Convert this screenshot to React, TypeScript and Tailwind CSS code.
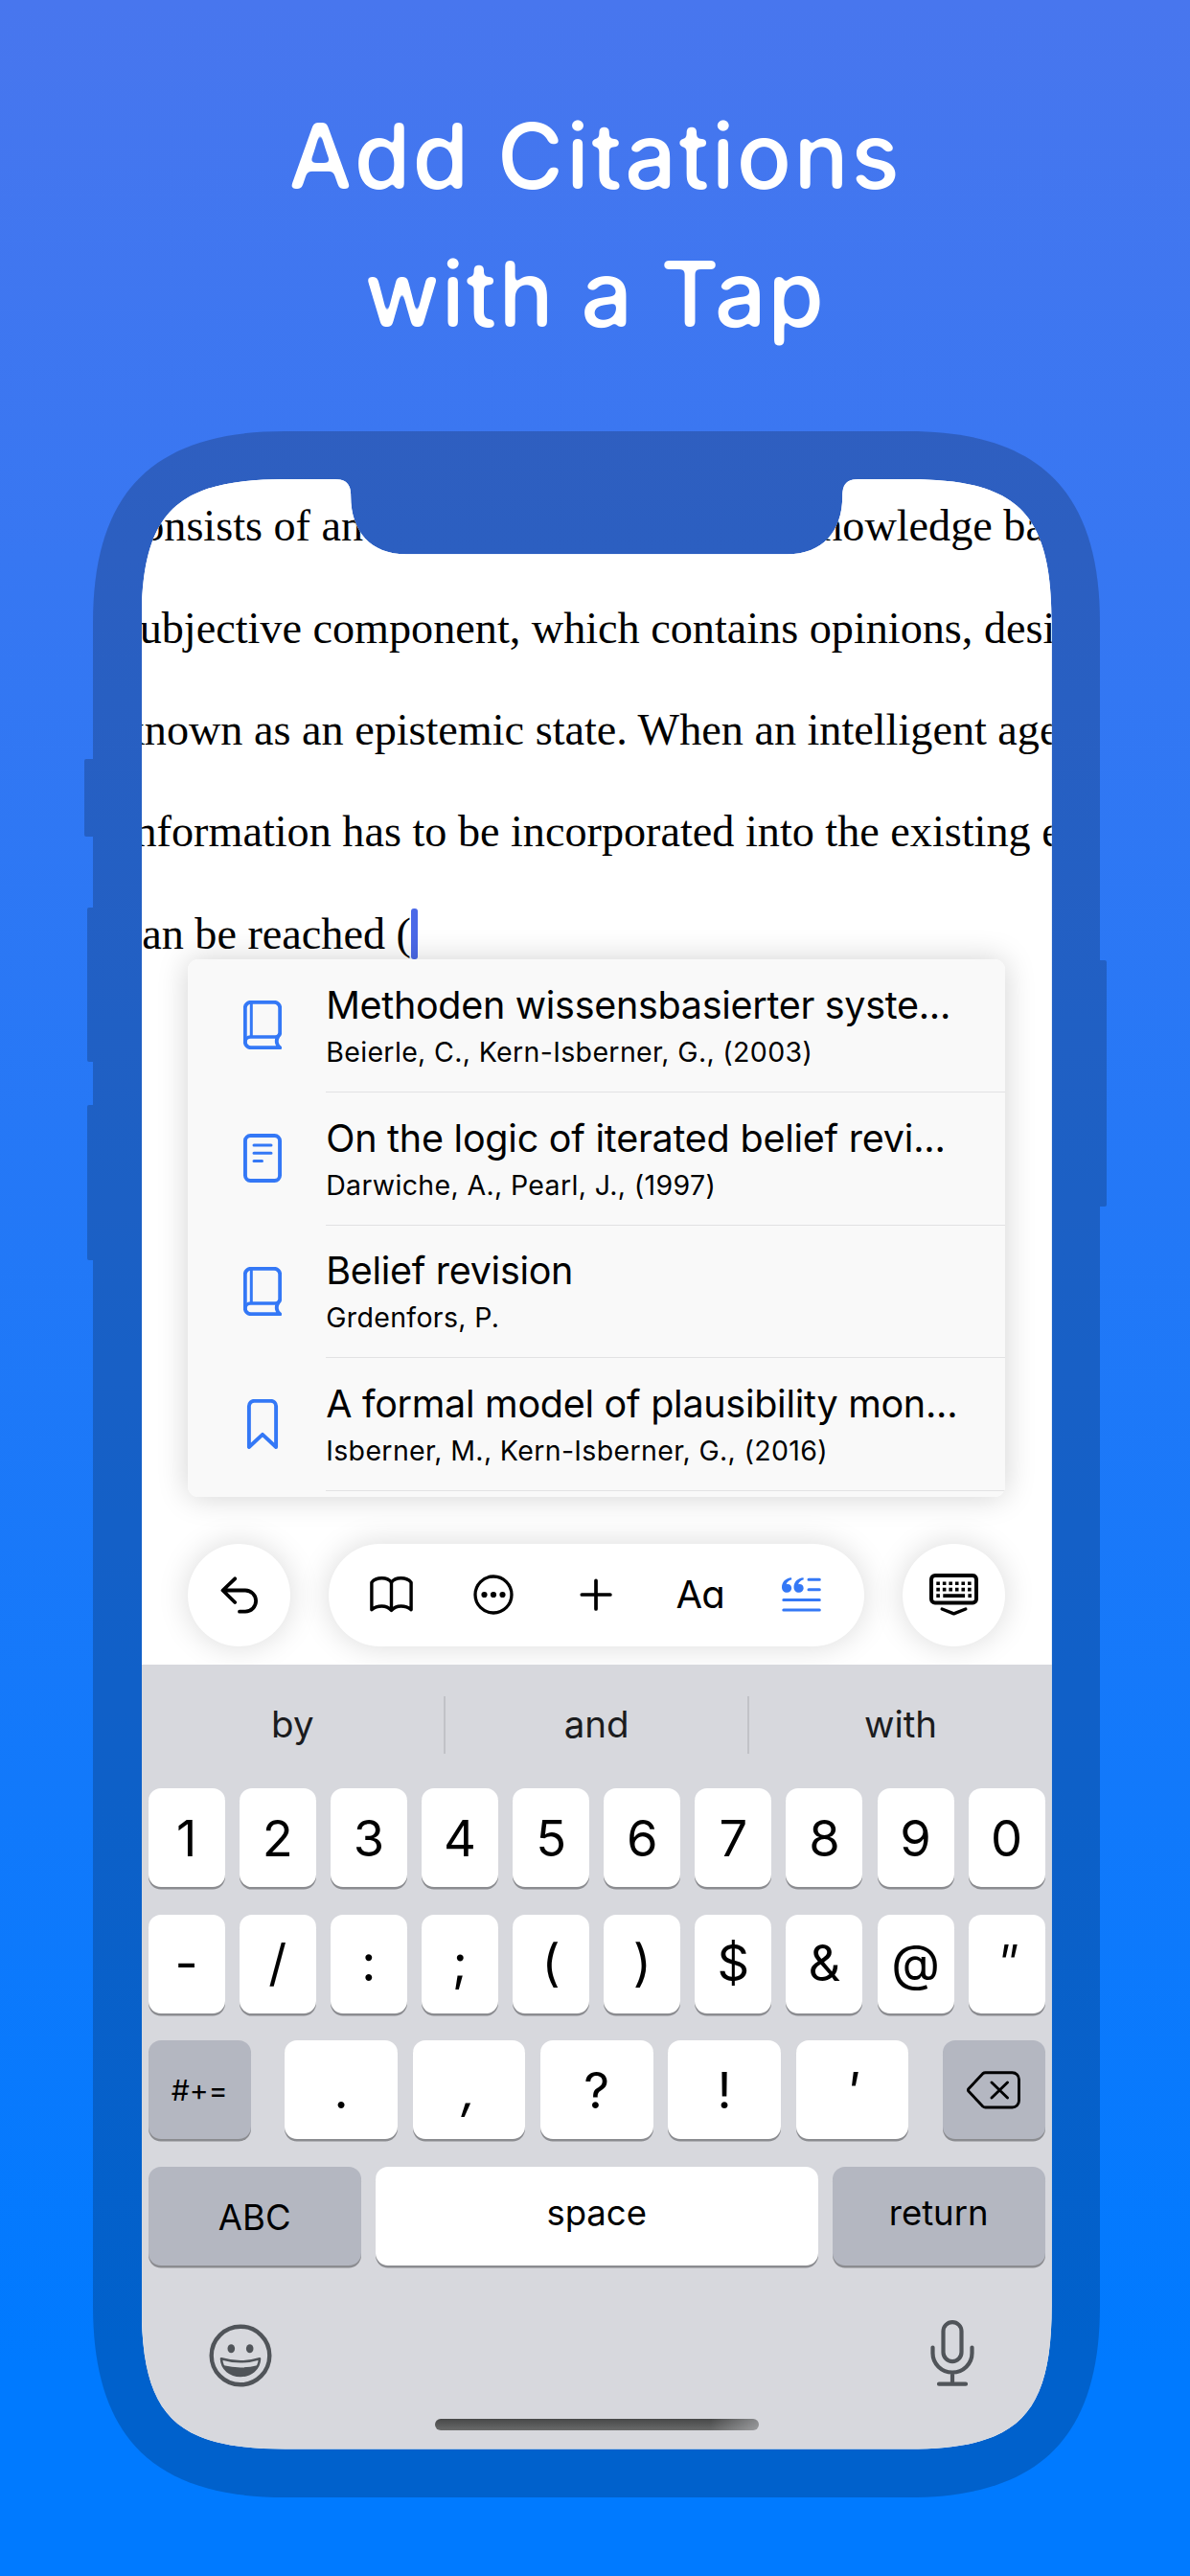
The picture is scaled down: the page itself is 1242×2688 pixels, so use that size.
import type { ReactNode } from "react";

const sans = "font-['Inter','Liberation_Sans',sans-serif]";

function BookIcon() {
  return (
    <svg width="40" height="51" viewBox="0 0 40 51" fill="none" stroke="#3478f6" strokeWidth="3.9" strokeLinecap="round" strokeLinejoin="round">
      <path d="M35 38c2-.8 3.2-2.2 3.2-4.500V7.800a6 6 0 0 0-6-6H7.800a6 6 0 0 0-6 6v35.400a6 6 0 0 0 6 6h30.400c-3.300-2-4.500-7.400-2.200-11.200" />
      <path d="M1.900 43.500c0-3.300 2.400-5.500 5.600-5.500H36" strokeWidth="3.400" />
      <path d="M8.300 2v36" strokeWidth="3" strokeLinecap="butt" />
    </svg>
  );
}

function ArticleIcon() {
  return (
    <svg width="40" height="51" viewBox="0 0 40 51" fill="none" stroke="#3478f6" strokeWidth="3.9" strokeLinecap="round">
      <rect x="1.950" y="1.950" width="36.100" height="47.100" rx="5.500" />
      <path d="M11 12h18M11 20.300h18M11 28.600h8.500" strokeWidth="3" />
    </svg>
  );
}

function BookmarkIcon() {
  return (
    <svg width="40" height="52" viewBox="0 0 40 52" fill="none" stroke="#3478f6" strokeWidth="3.900" strokeLinejoin="round">
      <path d="M5.900 50V7.300a5.500 5.500 0 0 1 5.500-5.500h17.200a5.500 5.500 0 0 1 5.500 5.500V50L20 36.800z" />
    </svg>
  );
}

const citations = [
  { icon: <BookIcon />, title: "Methoden wissensbasierter syste...", tt: "tracking-[-0.3px]", sub: "Beierle, C., Kern-Isberner, G., (2003)" },
  { icon: <ArticleIcon />, title: "On the logic of iterated belief revi...", tt: "tracking-[-0.24px]", sub: "Darwiche, A., Pearl, J., (1997)" },
  { icon: <BookIcon />, title: "Belief revision", tt: "tracking-[-0.3px]", sub: "Grdenfors, P." },
  { icon: <BookmarkIcon />, title: "A formal model of plausibility mon...", tt: "tracking-[-0.28px]", sub: "Isberner, M., Kern-Isberner, G., (2016)" },
];

function CitationPopup() {
  return (
    <div className={`absolute top-[501px] left-[48.5px] h-[561px] w-[852.5px] overflow-hidden rounded-[11px] bg-[#f9f9f9] text-black ${sans}`}>
      {citations.map((c) => (
        <div key={c.title} className="flex h-[138.8px]">
          <div className="flex w-[144px] items-center justify-center pr-[1px] pb-[1px] pl-[12px]">{c.icon}</div>
          <div className="flex-1 border-b-[1.5px] border-[#e2e2e3] pt-[23.8px]">
            <div className={`text-[39.5px] leading-[48px] whitespace-nowrap ${c.tt}`}>{c.title}</div>
            <div className="mt-[3px] text-[28.5px] leading-[44px] tracking-[0.35px] whitespace-nowrap">{c.sub}</div>
          </div>
        </div>
      ))}
    </div>
  );
}

function Toolbar() {
  const shadow = "shadow-[0_0_32px_rgba(0,0,0,0.15)]";
  return (
    <div className="absolute top-[1110.5px] left-[48.5px] flex h-[107px] w-[852.5px] items-center justify-between text-black">
      <div className={`flex size-[107px] items-center justify-center rounded-full bg-white ${shadow}`}>
        <svg width="40" height="39" viewBox="0 0 40 39" fill="none" stroke="currentColor" strokeWidth="3.800" strokeLinecap="round" strokeLinejoin="round">
          <path d="M15.200 2.300L2.500 14.500L15.200 27M3 14.500H26a11.100 11.100 0 0 1 0 22.200H20" />
        </svg>
      </div>
      <div className={`grid h-[107px] w-[559px] grid-cols-5 items-center justify-items-center rounded-full bg-white px-[11.500px] ${shadow}`}>
        <svg width="45" height="38" viewBox="0 0 45 38" fill="none" stroke="currentColor" strokeWidth="3.400" strokeLinejoin="round">
          <path d="M22.500 35.500V6.200C20.200 2.900 16.400 1.800 12.600 1.800S4.300 3.200 1.900 6.200V34.700C5 32.100 8.800 31 12.400 31S20 32.400 22.500 35.500C25 32.400 29 31 32.600 31S40 32.100 43.100 34.700V6.200C40.700 3.200 36.200 1.800 32.400 1.800S24.800 2.900 22.500 6.200" />
        </svg>
        <svg width="42" height="42" viewBox="0 0 42 42">
          <circle cx="21" cy="21" r="19" fill="none" stroke="currentColor" strokeWidth="3.300" />
          <circle cx="11.500" cy="21" r="3.100" /><circle cx="21" cy="21" r="3.100" /><circle cx="30.500" cy="21" r="3.100" />
        </svg>
        <svg width="34" height="34" viewBox="0 0 34 34" stroke="currentColor" strokeWidth="3.700" strokeLinecap="round"><path d="M17 2.300v29.600M2.300 17h29.600" /></svg>
        <span className={`pl-[2px] text-[40px] leading-none tracking-[-1px] ${sans} [font-feature-settings:'cv11'_1]`}>Aa</span>
        <svg width="41" height="37" viewBox="0 0 41 37" fill="#3478f6" stroke="#3478f6">
          <path d="M28 2.200h11.300M28 12.800h11.300M1.800 23.500h37.500M1.800 34h37.500" strokeWidth="3" strokeLinecap="round" />
          <path stroke="none" d="M10 .300C4 .800 0 4.800 0 10.200C0 13.600 2.300 15.800 5.300 15.800A4.700 4.700 0 0 0 10.200 11.200C10.200 8.600 8.300 7 6 7C5.500 7 5 7 4.700 7.200C5.200 4.900 7.300 3.200 10.300 2.300Z" />
          <path stroke="none" transform="translate(12.500 0)" d="M10 .300C4 .800 0 4.800 0 10.200C0 13.600 2.300 15.800 5.300 15.800A4.700 4.700 0 0 0 10.200 11.200C10.200 8.600 8.300 7 6 7C5.500 7 5 7 4.700 7.200C5.200 4.900 7.300 3.200 10.300 2.300Z" />
        </svg>
      </div>
      <div className={`flex size-[107px] items-center justify-center rounded-full bg-white ${shadow}`}>
        <svg width="51" height="44" viewBox="0 0 51 44" fill="none" stroke="currentColor">
          <rect x="2" y="2" width="47" height="28.500" rx="4" strokeWidth="4" />
          <path d="M7.300 10.200h37M7.300 16.600h37" strokeWidth="3.600" strokeDasharray="3.600 2.940" />
          <path d="M7.300 23.100h3.600M14.300 23.100h22.800M40.400 23.100h3.600" strokeWidth="3.600" />
          <path d="M13.200 37l12.300 4.800L37.800 37" strokeWidth="3.400" strokeLinecap="round" strokeLinejoin="round" />
        </svg>
      </div>
    </div>
  );
}

function DocumentArea() {
  return (
    <div className="relative h-[1237px] shrink-0 overflow-hidden bg-white">
      <div className="-mt-[3.800px] -ml-[20px] flex w-[1100px] flex-col font-['Liberation_Serif','Times_New_Roman',serif] text-[46.200px] leading-[106.400px] whitespace-nowrap text-black">
        <div className="flex h-[106.400px] gap-[454px]"><span>consists of an</span><span>knowledge base</span></div>
        <div className="h-[106.400px]">subjective component, which contains opinions, desires</div>
        <div className="h-[106.400px]">known as an epistemic state. When an intelligent agent</div>
        <div className="h-[106.400px]">information has to be incorporated into the existing ep</div>
        <div className="flex h-[106.400px]"><span>can be reached (</span><i className="mt-[26.500px] h-[53px] w-[7.500px] rounded-[3px] bg-[#4b69e8]" /></div>
      </div>
      <div className="absolute top-[501px] left-[48.500px] h-[561px] w-[852.500px] rounded-[11px] shadow-[0_0_32px_rgba(0,0,0,0.18)]" />
      <CitationPopup />
      <Toolbar />
    </div>
  );
}

function Key({ children, className }: { children: ReactNode; className: string }) {
  return <div className={`flex h-[103px] items-center justify-center rounded-[13px] text-black shadow-[0_2.500px_0_#8b8c90] ${className}`}>{children}</div>;
}

const digits = ["1", "2", "3", "4", "5", "6", "7", "8", "9", "0"];
const symbols = ["-", "/", ":", ";", "(", ")", "$", "&", "@"];

function Keyboard() {
  return (
    <div className={`flex flex-1 flex-col bg-[#d7d8dd] px-[7px] text-black ${sans}`}>
      <div className="-mx-[7px] flex h-[129px] items-center pb-[3px] text-[38.500px] text-[#1b1c1e]">
        <div className="flex-1 text-center">by</div>
        <div className="h-[60px] w-[2px] bg-[#c1c2c7]" />
        <div className="flex-1 text-center">and</div>
        <div className="h-[60px] w-[2px] bg-[#c1c2c7]" />
        <div className="flex-1 text-center">with</div>
      </div>
      <div className="flex flex-col gap-[28.700px] text-[52.500px] leading-none">
        <div className="flex justify-between">{digits.map((k) => <Key key={k} className="w-[80px] bg-white pt-[2px]">{k}</Key>)}</div>
        <div className="flex justify-between">
          {symbols.map((k) => <Key key={k} className="w-[80px] bg-white pb-[2px]">{k}</Key>)}
          <Key className="w-[80px] bg-white pb-[2px]"><span className="inline-block scale-x-115 font-light italic">"</span></Key>
        </div>
        <div className="flex justify-between">
          <Key className="w-[107px] bg-[#b4b7c1] text-[30px]">#+=</Key>
          <div className="flex w-[651px] justify-between">
            <Key className="w-[117.700px] bg-white">.</Key>
            <Key className="w-[117.700px] bg-white"><span className="italic">,</span></Key>
            <Key className="w-[117.700px] bg-white">?</Key>
            <Key className="w-[117.700px] bg-white">!</Key>
            <Key className="w-[117.700px] bg-white"><span className="italic">'</span></Key>
          </div>
          <Key className="w-[107px] bg-[#b4b7c1]">
            <svg width="56" height="40" viewBox="0 0 56 40" fill="none" stroke="currentColor" strokeWidth="2.900" strokeLinecap="round" strokeLinejoin="round">
              <path d="M19.500 1.700H47.500a7 7 0 0 1 7 7V31a7 7 0 0 1-7 7H19.500a4 4 0 0 1-2.700-1L2 21.200a2 2 0 0 1 0-2.700L16.800 2.700a4 4 0 0 1 2.700-1zM26 12l16.500 16M42.500 12L26 28" />
            </svg>
          </Key>
        </div>
        <div className="flex gap-[15px] text-[36.500px]">
          <Key className="w-[222px] bg-[#b4b7c1] pt-[4px]">ABC</Key>
          <Key className="flex-1 bg-white pb-[7px]">space</Key>
          <Key className="w-[222px] bg-[#b4b7c1] pb-[7px]">return</Key>
        </div>
      </div>
      <div className="mt-[57px] flex justify-between pr-[73.500px] pl-[63.500px] text-[#505459]">
        <svg width="66" height="66" viewBox="-33 -33 66 66" className="mt-[4px]">
          <circle r="30.300" fill="none" stroke="currentColor" strokeWidth="4.400" />
          <ellipse cx="-9.700" cy="-7.300" rx="3.800" ry="4.500" fill="currentColor" /><ellipse cx="9.700" cy="-7.300" rx="3.800" ry="4.500" fill="currentColor" />
          <path d="M-20 3.300Q0 9.200 20 3.300C19.500 14.500 10.500 21 0 21S-19.500 14.500-20 3.300Z" fill="none" stroke="currentColor" strokeWidth="2.600" strokeLinejoin="round" />
          <path d="M-17.500 10.300Q0 14.500 17.500 10.300C15 17.500 8 21 0 21S-15 17.500-17.500 10.300Z" fill="currentColor" />
        </svg>
        <svg width="46" height="70" viewBox="0 0 46 70" fill="none" stroke="currentColor" strokeWidth="4.200" strokeLinecap="round">
          <rect x="13.500" y="2.100" width="19" height="41" rx="9.500" />
          <path d="M2.500 28.500V34.500a20.500 20 0 0 0 41 0V28.500M23 55V66.700M9 66.700H37" />
        </svg>
      </div>
      <div className="mt-[32.500px] ml-[299px] h-[12.500px] w-[338px] rounded-full bg-[linear-gradient(90deg,transparent_85%,rgba(215,216,221,0.45)_100%),linear-gradient(#474848,#696a6a)]" />
    </div>
  );
}

export default function App() {
  return (
    <div className="relative flex h-[2688px] w-[1242px] flex-col overflow-hidden bg-[linear-gradient(180deg,#4876ee_0%,#007aff_92%)]">
      {/* Softens the corners of the headline letters */}
      <svg width="0" height="0" className="absolute">
        <filter id="round" x="-5%" y="-5%" width="110%" height="110%">
          <feGaussianBlur stdDeviation="2.700" />
          <feComponentTransfer><feFuncA type="linear" slope="7" intercept="-2.950" /></feComponentTransfer>
        </filter>
      </svg>
      <h1 className={`flex h-[450px] flex-col items-center pt-[91px] text-[95px] leading-[144px] font-medium whitespace-nowrap text-white [filter:url(#round)] ${sans}`}>
        <span className="tracking-[2.200px]">Add Citations</span>
        <span className="tracking-[1.700px]">with a Tap</span>
      </h1>
      <div className="relative ml-[97px] h-[2156px] w-[1051px]">
        <div className="absolute top-[342px] -left-[9px] h-[80.500px] w-[9px] rounded-l-[2px] bg-black/20" />
        <div className="absolute top-[497px] -left-[6px] h-[161px] w-[6px] rounded-l-[2px] bg-black/20" />
        <div className="absolute top-[702.500px] -left-[6px] h-[162px] w-[6px] rounded-l-[2px] bg-black/20" />
        <div className="absolute top-[552px] -right-[6.500px] h-[257px] w-[6.500px] rounded-r-[2px] bg-black/20" />
        <div className="h-full bg-black/20 pt-[50px] pl-[50.700px] [clip-path:path('M0,200C0,63,63,0,200,0H851C988,0,1051,63,1051,200V1956C1051,2093,988,2156,851,2156H200C63,2156,0,2093,0,1956Z')]">
          <div className="flex h-[2055.500px] w-[950px] flex-col bg-white [clip-path:path('M0,150C0,35,35,0,150,0H201C214,0,218.500,5,218.500,18C218.500,54,239,78.300,276,78.300H674C711,78.300,731.500,54,731.500,18C731.500,5,736,0,749,0H800C915,0,950,35,950,150V1905.500C950,2020.500,915,2055.500,800,2055.500H150C35,2055.500,0,2020.500,0,1905.500Z')]">
            <DocumentArea />
            <Keyboard />
          </div>
        </div>
      </div>
    </div>
  );
}
